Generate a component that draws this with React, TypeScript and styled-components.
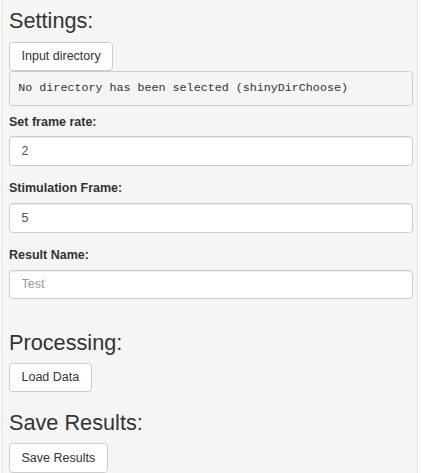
import styled, { createGlobalStyle } from "styled-components";

const GlobalStyle = createGlobalStyle`
  html, body {
    margin: 0;
    padding: 0;
    background: #fff;
  }
  body {
    font-family: "Liberation Sans", Arial, sans-serif;
    font-size: 12.5px;
    line-height: 1.42857;
    color: #333;
  }
`;

const Well = styled.div`
  margin-left: 1px;
  width: 417px;
  box-sizing: border-box;
  min-height: 480px;
  padding: 9px 4px 20px 7px;
  background: #f5f5f5;
  border: 1px solid #e3e3e3;
  border-top: none;
  border-radius: 0 0 3.5px 3.5px;
`;

const Heading = styled.h3<{ $top?: number; $bottom?: number }>`
  margin: ${(p) => p.$top ?? 0}px 0 ${(p) => p.$bottom ?? 8.5}px;
  font-size: 21.7px;
  font-weight: 500;
  line-height: 24.2px;
  color: #333;
`;

const Button = styled.button`
  display: inline-block;
  box-sizing: border-box;
  height: 29.75px;
  padding: 5.25px 11.5px;
  font-family: inherit;
  font-size: 12.5px;
  line-height: 1.42857;
  color: #333;
  background: #fff;
  border: 1px solid #ccc;
  border-radius: 3.5px;
  cursor: pointer;
`;

const Pre = styled.pre`
  margin: 0 0 8px;
  padding: 8.3px;
  font-family: "Liberation Mono", "Courier New", monospace;
  font-size: 11.7px;
  line-height: 15.5px;
  color: #333;
  background: #f5f5f5;
  border: 1px solid #ccc;
  border-radius: 3.5px;
  white-space: pre-wrap;
`;

const FormGroup = styled.div`
  margin-bottom: 14.5px;
`;

const Label = styled.label`
  display: block;
  margin-bottom: 5px;
  font-weight: bold;
  line-height: 17.5px;
`;

const Input = styled.input`
  display: block;
  width: 100%;
  box-sizing: border-box;
  height: 29.75px;
  padding: 5.25px 11.5px;
  font-family: inherit;
  font-size: 12.5px;
  color: #555;
  background: #fff;
  border: 1px solid #ccc;
  border-radius: 3.5px;
  box-shadow: inset 0 1px 1px rgba(0, 0, 0, 0.075);
  outline: none;

  &::placeholder {
    color: #999;
  }
`;

const Block = styled.div``;

export default function App() {
  return (
    <>
      <GlobalStyle />
      <Well>
        <Heading>Settings:</Heading>
        <Block>
          <Button>Input directory</Button>
        </Block>
        <Pre>No directory has been selected (shinyDirChoose)</Pre>
        <FormGroup>
          <Label>Set frame rate:</Label>
          <Input type="number" defaultValue={2} />
        </FormGroup>
        <FormGroup>
          <Label>Stimulation Frame:</Label>
          <Input type="number" defaultValue={5} />
        </FormGroup>
        <FormGroup>
          <Label>Result Name:</Label>
          <Input type="text" placeholder="Test" />
        </FormGroup>
        <Heading $top={32} $bottom={7}>
          Processing:
        </Heading>
        <Block>
          <Button>Load Data</Button>
        </Block>
        <Heading $top={18.5}>Save Results:</Heading>
        <Block>
          <Button>Save Results</Button>
        </Block>
      </Well>
    </>
  );
}
